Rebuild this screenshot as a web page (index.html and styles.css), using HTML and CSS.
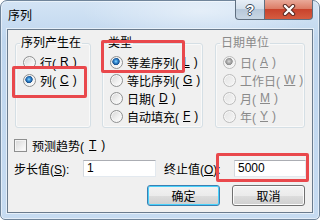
FILE: index.html
```html
<!DOCTYPE html>
<html lang="zh-CN">
<head>
    <meta charset="UTF-8">
    <title>序列</title>
    <link rel="stylesheet" href="styles.css">
</head>
<body>
    <div class="window">
        <div class="titlebar">
            <span class="title">序列</span>
            <span class="tb-btn help">?</span>
            <span class="tb-btn close">
                <svg width="16" height="12" viewBox="0 0 16 12">
                    <path d="M4 2 L12 10 M12 2 L4 10" stroke="#5a2a22" stroke-width="4.4" stroke-linecap="round"/>
                    <path d="M4 2 L12 10 M12 2 L4 10" stroke="#ffffff" stroke-width="2.4" stroke-linecap="round"/>
                </svg>
            </span>
        </div>

        <div class="client">
            <div class="groups">
                <fieldset class="group g-rowcol">
                    <legend>序列产生在</legend>
                    <div class="opt"><span class="radio"></span>行(<u>R</u>)</div>
                    <div class="opt"><span class="radio on"></span>列(<u>C</u>)</div>
                </fieldset>

                <fieldset class="group g-type">
                    <legend>类型</legend>
                    <div class="opt"><span class="radio on"></span>等差序列(<u>L</u>)</div>
                    <div class="opt"><span class="radio"></span>等比序列(<u>G</u>)</div>
                    <div class="opt"><span class="radio"></span>日期(<u>D</u>)</div>
                    <div class="opt"><span class="radio"></span>自动填充(<u>F</u>)</div>
                </fieldset>

                <fieldset class="group g-date disabled">
                    <legend>日期单位</legend>
                    <div class="opt"><span class="radio on"></span>日(<u>A</u>)</div>
                    <div class="opt"><span class="radio"></span>工作日(<u>W</u>)</div>
                    <div class="opt"><span class="radio"></span>月(<u>M</u>)</div>
                    <div class="opt"><span class="radio"></span>年(<u>Y</u>)</div>
                </fieldset>
            </div>

            <div class="trend"><span class="check"></span>预测趋势(<u>T</u>)</div>

            <div class="values">
                <span class="lbl lbl-step">步长值(<u>S</u>):</span>
                <span class="field f-step">1</span>
                <span class="lbl lbl-stop">终止值(<u>O</u>):</span>
                <span class="field f-stop">5000</span>
            </div>

            <div class="actions">
                <span class="btn default">确定</span>
                <span class="btn">取消</span>
            </div>

            <!-- 红色标注框 -->
            <div class="mark mark-col"></div>
            <div class="mark mark-type"></div>
            <div class="mark mark-stop"></div>
        </div>
    </div>
</body>
</html>
```

FILE: styles.css
```css
html, body {
    margin: 0;
    padding: 0;
    background: #fff;
}

body {
    font-family: "Liberation Sans", "Noto Sans CJK SC", sans-serif;
    font-size: 12px;
    color: #000;
}

.window {
    width: 320px;
    height: 220px;
    box-sizing: border-box;
    border: 1px solid #70859b;
    border-radius: 7px 7px 5px 5px;
    padding: 0 6px 6px 6px;
    background:
        radial-gradient(ellipse 120px 30px at 200px 10px, rgba(255, 255, 255, 0.45), rgba(255, 255, 255, 0)),
        linear-gradient(180deg, #d3e4f5 0%, #bfd6ee 40px, #c6dbf1 100%);
    box-shadow: inset 0 0 0 1px rgba(255, 255, 255, 0.5);
}

/* 标题栏 */
.titlebar {
    display: flex;
    align-items: flex-start;
    height: 28px;
    padding: 0 0 0 1px;
}

.title {
    flex: 1;
    margin-top: 8px;
    line-height: 14px;
    font-size: 12px;
}

.tb-btn {
    display: flex;
    align-items: center;
    justify-content: center;
    height: 20px;
    margin-top: -1px;
    box-sizing: border-box;
    border: 1px solid #5f6f80;
    border-top: none;
}

.help {
    width: 29px;
    border-radius: 0 0 0 4px;
    border-right: none;
    background: linear-gradient(180deg, #e7eef6 0%, #d3dfeb 45%, #b7c8da 50%, #c8d6e4 100%);
    color: #fff;
    font-weight: bold;
    font-size: 14px;
    text-shadow: 1px 0 #3d4c5c, -1px 0 #3d4c5c, 0 1px #3d4c5c, 0 -1px #3d4c5c;
}

.close {
    width: 49px;
    border-radius: 0 0 4px 0;
    background: linear-gradient(180deg, #e9a999 0%, #dc7d67 45%, #c8432c 50%, #d55c40 100%);
}

/* 客户区 */
.client {
    position: relative;
    height: 184px;
    box-sizing: border-box;
    border: 1px solid #6a7b8d;
    background: #f0f0f0;
    box-shadow: 0 0 0 1px rgba(255, 255, 255, 0.55);
}

.groups {
    display: flex;
    align-items: flex-start;
    padding: 6px 0 0 7px;
}

.group {
    height: 92px;
    box-sizing: border-box;
    margin: 0;
    min-width: 0;
    padding: 3px 0 0 7px;
    border: 1px solid #d5dfe5;
    border-radius: 3px;
    box-shadow: inset 0 0 0 1px rgba(255, 255, 255, 0.6);
}

.group legend {
    margin-left: -3px;
    padding: 0 1px;
    line-height: 14px;
}

.g-rowcol { width: 76px; }
.g-type { width: 101px; margin-left: 11px; }
.g-date { width: 90px; margin-left: 12px; }

.opt {
    display: flex;
    align-items: center;
    gap: 4px;
    height: 18px;
    white-space: nowrap;
}

.radio {
    width: 13px;
    height: 13px;
    box-sizing: border-box;
    flex: none;
    border-radius: 50%;
    border: 1px solid #8f9091;
    background: linear-gradient(135deg, #d4d4d4 0%, #f2f2f2 60%, #ffffff 100%);
    box-shadow: inset 0 0 0 1px #f7f7f7;
}

.radio.on {
    background:
        radial-gradient(circle at 45% 40%, #8fdcff 0, #3b8fd6 1.6px, #14508f 3.4px, rgba(20, 80, 143, 0) 4px),
        linear-gradient(135deg, #d4d4d4 0%, #f2f2f2 60%, #ffffff 100%);
}

.disabled {
    color: #8a8a8a;
}

.disabled .radio {
    border-color: #bcbcbc;
    background: linear-gradient(135deg, #e4e4e4 0%, #f6f6f6 100%);
}

.disabled .radio.on {
    background:
        radial-gradient(circle at 45% 40%, #d8d8d8 0, #a9a9a9 2px, #8c8c8c 3.4px, rgba(140, 140, 140, 0) 4px),
        linear-gradient(135deg, #e4e4e4 0%, #f6f6f6 100%);
}

/* 预测趋势 */
.trend {
    display: flex;
    align-items: center;
    gap: 5px;
    height: 14px;
    margin-top: 10px;
    padding-left: 6px;
}

.check {
    width: 13px;
    height: 13px;
    box-sizing: border-box;
    border: 1px solid #8e8f8f;
    background: linear-gradient(135deg, #d6d6d6 0%, #f4f4f4 70%, #ffffff 100%);
    box-shadow: inset 0 0 0 1px #f4f4f4;
}

/* 步长值 / 终止值 */
.values {
    display: flex;
    align-items: center;
    height: 17px;
    margin-top: 8px;
    padding-left: 6px;
}

.lbl-step { width: 69px; }
.lbl-stop { width: 70px; margin-left: 8px; }

.field {
    height: 17px;
    box-sizing: border-box;
    padding-left: 3px;
    line-height: 15px;
    background: #fff;
    border: 1px solid #e3e9ef;
    border-top-color: #abadb3;
    border-left-color: #d3d8de;
}

.f-step { width: 73px; }
.f-stop { width: 72px; }

/* 按钮 */
.actions {
    display: flex;
    justify-content: flex-end;
    gap: 12px;
    margin-top: 8px;
    padding-right: 7px;
}

.btn {
    width: 73px;
    height: 21px;
    box-sizing: border-box;
    display: flex;
    align-items: center;
    justify-content: center;
    border: 1px solid #707070;
    border-radius: 3px;
    background: linear-gradient(180deg, #f2f2f2 0%, #ebebeb 50%, #dddddd 51%, #cfcfcf 100%);
    box-shadow: inset 0 0 0 1px #fcfcfc;
}

.btn.default {
    border-color: #3c7fb1;
    box-shadow: inset 0 0 0 1px #48d1fb;
}

/* 红色标注框 */
.mark {
    position: absolute;
    box-sizing: border-box;
    border: 3px solid #e9484c;
    border-radius: 2px;
}

.mark-col { left: 4px; top: 36px; width: 75px; height: 32px; }
.mark-type { left: 93px; top: 10px; width: 84px; height: 33px; }
.mark-stop { left: 208px; top: 123px; width: 93px; height: 29px; }
```
